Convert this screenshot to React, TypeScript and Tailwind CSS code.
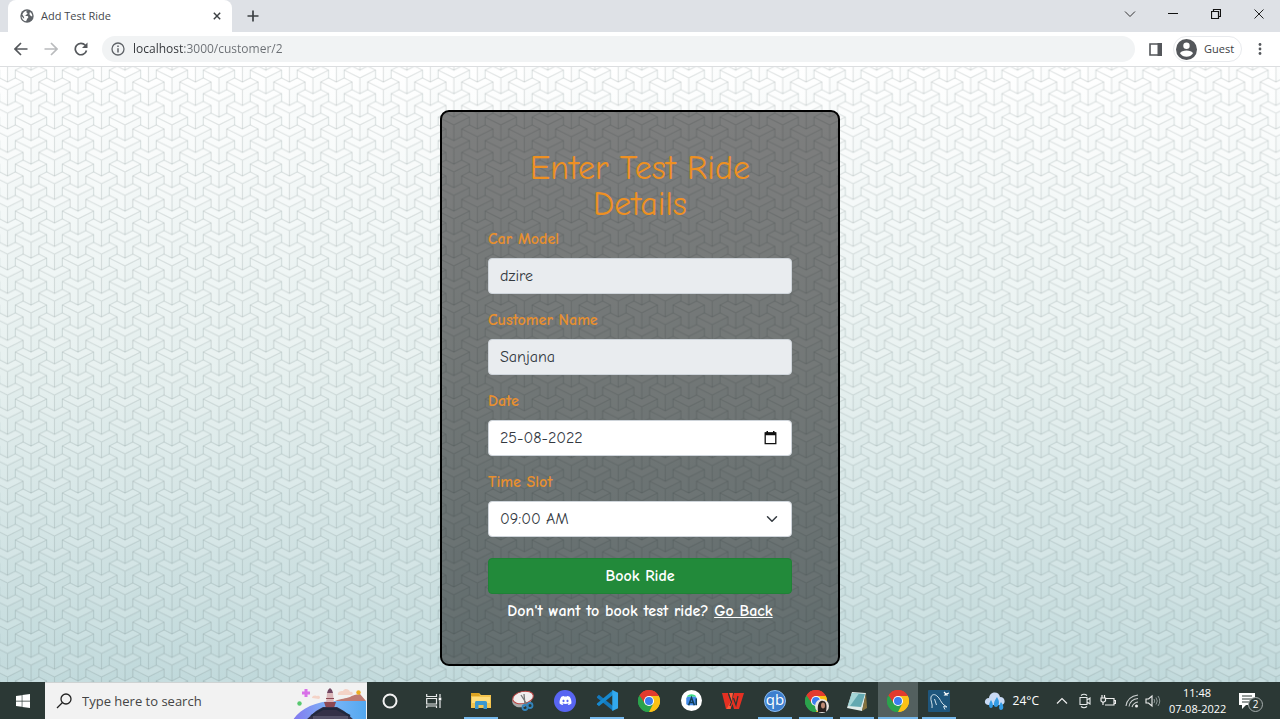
import React from "react";
import { FaDiscord, FaWindows } from "react-icons/fa";

const tripodOutline =
  "M2 -1V0L1 .5V1.5L0 2L-1 1.5V.5L-2 0V-1L-1 -1.5L0 -1L1 -1.5Z";
const tripodRidges = "M0 0L2 -1M0 0L-2 -1M0 0V2";

const tripodCentres = [
  [0, 0], [6, 0], [0, 3], [6, 3], [3, -1.5], [3, 1.5], [3, 4.5],
];

function PatternBackdrop() {
  return (
    <svg className="absolute inset-0 h-full w-full" aria-hidden="true">
      <defs>
        <pattern id="tripods" width="6" height="3" patternUnits="userSpaceOnUse" patternTransform="translate(31 11) scale(7.83)">
          {tripodCentres.map(([x, y]) => (
            <g key={`${x},${y}`} transform={`translate(${x} ${y})`}>
              <path d="M0 0L2 -1V0L1 .5V1.5L0 2Z" fill="#5a6a6a" fillOpacity=".015" />
              <path d="M0 0L2 -1L1 -1.5L0 -1L-1 -1.5L-2 -1Z" fill="#fff" fillOpacity=".08" />
              <path d={tripodOutline} fill="none" stroke="#506464" strokeOpacity=".09" strokeWidth=".15" />
              <path d={tripodRidges} fill="none" stroke="#506464" strokeOpacity=".17" strokeWidth=".15" />
            </g>
          ))}
        </pattern>
      </defs>
      <rect width="100%" height="100%" fill="url(#tripods)" />
    </svg>
  );
}

function ChromeLogo({ className = "" }: { className?: string }) {
  return (
    <svg viewBox="0 0 48 48" className={`h-[22px] w-[22px] ${className}`} aria-hidden="true">
      <path d="M24 24L3.2 12A24 24 0 0 1 44.8 12Z" fill="#e33b2e" />
      <path d="M24 24L44.8 12A24 24 0 0 1 24 48Z" fill="#fbc116" />
      <path d="M24 24V48A24 24 0 0 1 3.2 12Z" fill="#2ba24c" />
      <path d="M24 13H45.3L44.8 12A24 24 0 0 0 3.2 12L14.5 29.5Z" fill="#e33b2e" />
      <path d="M33.5 29.5L24 48A24 24 0 0 0 45.3 13H24Z" fill="#fbc116" />
      <path d="M14.5 29.5L3.2 12A24 24 0 0 0 24 48L33.5 29.5Z" fill="#2ba24c" />
      <circle cx="24" cy="24" r="11" fill="#fff" />
      <circle cx="24" cy="24" r="8.7" fill="#3b7ded" />
    </svg>
  );
}

function TitleBar() {
  return (
    <header className="flex h-8 items-end bg-[#dee1e6] pl-2">
      <div className="flex h-8 w-56 items-center rounded-t-lg bg-white px-3">
        <svg viewBox="0 0 24 24" className="h-3.5 w-3.5 shrink-0" aria-hidden="true">
          <circle cx="12" cy="12" r="11.5" fill="#5f6368" />
          <path d="M13 3C10 3.5 10 6 12.500 7C13.500 8.500 12 9.500 10.500 10C10 11.500 9 12 7.500 12H12.500C14.500 12.500 15 14.500 13 16C12 17 11.500 19 10.500 21C5.500 20.500 3 17 2.600 12.500L7 16.500V14L4 9.500C5.500 5 9 2.700 13 3Z" fill="#fff" />
          <path d="M17 5C19.500 6.500 21.300 9.500 21 12.500C19.500 12.500 18.500 12 17.500 10.500C16 9.500 16 8 17 5Z" fill="#fff" />
        </svg>
        <span className="ml-[7px] flex-1 text-[11px] leading-4 text-[#45484c]">Add Test Ride</span>
        <button aria-label="Close tab" className="-mr-[5px] flex h-4 w-4 items-center justify-center">
          <svg viewBox="0 0 10 10" className="h-2 w-2" aria-hidden="true"><path d="M1 1L9 9M9 1L1 9" stroke="#3c4043" strokeWidth="1.8" /></svg>
        </button>
      </div>
      <button aria-label="New tab" className="ml-3 flex h-8 w-[18px] items-center justify-center">
        <svg viewBox="0 0 12 12" className="h-3 w-3" aria-hidden="true"><path d="M6 .5V11.500M.5 6H11.500" stroke="#3c4043" strokeWidth="1.700" /></svg>
      </button>
      <div className="ml-auto flex h-full items-start">
        <button aria-label="Search tabs" className="flex h-[27px] w-[43px] items-center justify-center">
          <svg viewBox="0 0 12 12" className="h-3 w-3" aria-hidden="true"><path d="M1 3.500L6 8.500L11 3.500" fill="none" stroke="#333" /></svg>
        </button>
        <button aria-label="Minimise" className="flex h-[27px] w-[43px] items-center justify-center">
          <svg viewBox="0 0 10 10" className="h-2.5 w-2.5" aria-hidden="true"><path d="M0 4.500H10" stroke="#111" /></svg>
        </button>
        <button aria-label="Restore" className="flex h-[27px] w-[43px] items-center justify-center">
          <svg viewBox="0 0 10 10" className="h-2.5 w-2.5" aria-hidden="true"><path d="M.5 2.500H7.500V9.500H.5ZM2.500 2.500V.5H9.500V7.500H7.500" fill="none" stroke="#111" strokeWidth="1.200" /></svg>
        </button>
        <button aria-label="Close window" className="flex h-[27px] w-[43px] items-center justify-center">
          <svg viewBox="0 0 10 10" className="h-2.5 w-2.5" aria-hidden="true"><path d="M.5 .5L9.500 9.500M9.500 .5L.5 9.500" stroke="#222" /></svg>
        </button>
      </div>
    </header>
  );
}

function Toolbar() {
  return (
    <nav className="flex h-[35px] items-center border-b border-[#dcdee0] bg-white pr-3 pl-[6px]">
      <button aria-label="Back" className="flex w-[30px] justify-center">
        <svg viewBox="0 0 14 14" className="h-3.5 w-3.5" aria-hidden="true"><path d="M13.500 7H1.500M7 1L1 7L7 13" fill="none" stroke="#54575b" strokeWidth="1.700" /></svg>
      </button>
      <button aria-label="Forward" className="flex w-[30px] justify-center">
        <svg viewBox="0 0 14 14" className="h-3.5 w-3.5" aria-hidden="true"><path d="M.5 7H12.500M7 1L13 7L7 13" fill="none" stroke="#b9bbbd" strokeWidth="1.700" /></svg>
      </button>
      <button aria-label="Reload" className="flex w-[30px] justify-center">
        <svg viewBox="0 0 14 14" className="h-3.5 w-3.5" aria-hidden="true"><path d="M12.500 8.500A5.700 5.700 0 1 1 11.300 3.300" fill="none" stroke="#54575b" strokeWidth="1.700" /><path d="M13.500 .5V6H8Z" fill="#54575b" /></svg>
      </button>
      <div className="ml-[6px] flex h-[26px] flex-1 items-center rounded-full bg-[#f1f3f4] pl-[9px]">
        <svg viewBox="0 0 14 14" className="h-3.5 w-3.5 shrink-0" aria-hidden="true"><circle cx="7" cy="7" r="6" fill="none" stroke="#5f6368" strokeWidth="1.300" /><path d="M7 6.200V10.500M7 3.500V5" stroke="#5f6368" strokeWidth="1.500" /></svg>
        <input
          aria-label="Address"
          defaultValue="localhost:3000/customer/2"
          className="ml-2 min-w-0 flex-1 bg-linear-to-r from-[#303337] from-[51px] to-[#6a6e73] to-[51px] bg-clip-text text-xs leading-5 text-transparent outline-none"
        />
      </div>
      <button aria-label="Side panel" className="ml-[14px]">
        <svg viewBox="0 0 13 13" className="h-[13px] w-[13px]" aria-hidden="true"><path d="M1 1H12V12H1Z" fill="none" stroke="#54575b" strokeWidth="1.600" /><path d="M8.500 0H13V13H8.500Z" fill="#54575b" /></svg>
      </button>
      <button className="ml-[11px] flex h-[26px] w-[69px] items-center rounded-full border border-[#e8eaed] pl-[2px]">
        <svg viewBox="0 0 21 21" className="h-[21px] w-[21px]" aria-hidden="true"><circle cx="10.500" cy="10.500" r="10.500" fill="#54575b" /><circle cx="10.500" cy="6.700" r="3.200" fill="#fff" /><path d="M4 14.200C5.500 10.600 15.500 10.600 17 14.200C15.500 16.500 13 17.800 10.500 17.800S5.500 16.500 4 14.200Z" fill="#fff" /></svg>
        <span className="ml-[7px] text-[11px] leading-4 text-[#3c4043]">Guest</span>
      </button>
      <button aria-label="Menu" className="ml-[10px] flex w-4 justify-center">
        <svg viewBox="0 0 4 14" className="h-3.5 w-1" aria-hidden="true"><circle cx="2" cy="2.500" r="1.400" fill="#54575b" /><circle cx="2" cy="7" r="1.400" fill="#54575b" /><circle cx="2" cy="11.500" r="1.400" fill="#54575b" /></svg>
      </button>
    </nav>
  );
}

const labelClass = "mb-2 block text-base font-bold leading-[22px] text-[#e78f2f]";
const fieldClass = "h-9 w-full rounded border border-[#ced4da] px-[11px] text-base leading-6 text-[#33393f] outline-none";

function RideForm() {
  return (
    <form
      className="relative w-full max-w-[400px] rounded-[9px] border-2 border-black bg-black/50 px-[46px] pt-[38px] pb-[42px] font-['Comic_Sans_MS','Comic_Neue','Noto_Sans',cursive]"
      onSubmit={(event) => event.preventDefault()}
    >
      <h1 className="mb-[6px] text-center text-[34px] leading-9 text-[#ee9022]">Enter Test Ride Details</h1>
      <div className="mb-[15px]">
        <label htmlFor="model" className={labelClass}>Car Model</label>
        <input id="model" readOnly value="dzire" className={`${fieldClass} bg-[#e9ecef]`} />
      </div>
      <div className="mb-[15px]">
        <label htmlFor="customer" className={labelClass}>Customer Name</label>
        <input id="customer" readOnly value="Sanjana" className={`${fieldClass} bg-[#e9ecef]`} />
      </div>
      <div className="mb-[15px]">
        <label htmlFor="date" className={labelClass}>Date</label>
        <div className="relative">
          <input id="date" defaultValue="25-08-2022" className={`${fieldClass} bg-white`} />
          <button type="button" aria-label="Open calendar" className="absolute inset-y-0 right-[15px] flex items-center">
            <svg viewBox="0 0 13 14" className="h-3.5 w-[13px]" aria-hidden="true"><path d="M1.200 2H11.800V12.700H1.200Z" fill="none" stroke="#111" strokeWidth="1.300" /><path d="M1 1.500H12V4.300H1ZM2.500 0H4V2H2.500ZM9 0H10.500V2H9Z" fill="#111" /></svg>
          </button>
        </div>
      </div>
      <div className="mb-[21px]">
        <label htmlFor="slot" className={labelClass}>Time Slot</label>
        <div className="relative">
          <select id="slot" defaultValue="09:00 AM" className={`${fieldClass} appearance-none bg-white`}>
            <option>09:00 AM</option>
          </select>
          <svg viewBox="0 0 16 16" className="pointer-events-none absolute top-3 right-[14px] h-3 w-3" aria-hidden="true"><path d="M2 5L8 11L14 5" fill="none" stroke="#343a40" strokeWidth="2" strokeLinecap="round" strokeLinejoin="round" /></svg>
        </div>
      </div>
      <button type="submit" className="mb-[6px] block h-9 w-full rounded border border-[#1f8236] bg-[#228a3a] text-base font-bold leading-[22px] text-white">Book Ride</button>
      <p className="text-center text-base font-bold leading-[22px] whitespace-nowrap text-white">
        Don't want to book test ride? <a href="#back" className="underline">Go Back</a>
      </p>
    </form>
  );
}

function SearchArt() {
  return (
    <svg viewBox="0 0 76 37" className="h-[37px] w-[76px] shrink-0" aria-hidden="true">
      <defs>
        <linearGradient id="sea" x1="0" x2="1"><stop stopColor="#8378ee" /><stop offset=".5" stopColor="#7cb6f8" /><stop offset="1" stopColor="#53a8ef" /></linearGradient>
      </defs>
      <path d="M2 37C9 25 27 17 47 18H75V37Z" fill="url(#sea)" />
      <path d="M44 18C51 15 54 16 59 14C64 11 66 12 69 11L75 18Z" fill="#bd7b73" />
      <path d="M47 12C46 8 51 8 52 8C54 4 59 7 59 9C62 8 63 12 60 12ZM21 15C21 12 25 12 26 13C29 12 30 15 28 16Z" fill="#f4d3c7" />
      <path d="M15 6V14M11 10H19" stroke="#d871e8" strokeWidth="3" />
      <circle cx="8.500" cy="20.500" r="2.200" fill="#57c86e" /><circle cx="67.500" cy="9.500" r="2.200" fill="#efae22" />
      <path d="M36 10L37 7L39 5L41 7L42 10Z" fill="#6f4560" /><path d="M36 10H42L43 21H35Z" fill="#dbb7ba" /><path d="M35 15H43V16H35ZM33 19H45L43 25H35Z" fill="#8d4852" />
      <path d="M15 37L25 28L32 24H46L53 28L63 37Z" fill="#343047" /><path d="M22 37V33H57V37Z" fill="#545168" /><path d="M20 33L32 26H46L59 33" fill="none" stroke="#20283d" strokeWidth="2" />
    </svg>
  );
}

function TaskButton({ label, open, active, children }: { label: string; open?: boolean; active?: boolean; children: React.ReactNode }) {
  return (
    <button aria-label={label} className={`flex h-full w-10 shrink-0 justify-center ${active ? "bg-[#53605f]" : ""}`}>
      <span className={`flex h-full items-center justify-center border-b-2 pt-[2px] ${active ? "w-10" : "w-[34px]"} ${open ? "border-[#76b9ed]" : "border-transparent"}`}>{children}</span>
    </button>
  );
}

function Taskbar() {
  return (
    <footer className="flex h-[37px] overflow-hidden bg-[#2b3835] text-white">
      <button aria-label="Start" className="flex w-[45px] shrink-0 items-center justify-center"><FaWindows className="h-4 w-4" /></button>
      <div className="flex w-[322px] shrink-0 items-center border-t border-[#cfd3d3] bg-[#f2f2f2]">
        <svg viewBox="0 0 16 16" className="ml-[11px] h-4 w-4 shrink-0" aria-hidden="true"><circle cx="10" cy="6" r="5" fill="none" stroke="#222" strokeWidth="1.300" /><path d="M6.500 9.500L1 15" stroke="#222" strokeWidth="1.300" /></svg>
        <input aria-label="Search" placeholder="Type here to search" className="ml-[10px] min-w-0 flex-1 bg-transparent text-[13px] leading-5 outline-none placeholder:text-[#444]" />
        <SearchArt />
      </div>
      <div className="flex shrink-0 gap-1 pl-[3px]">
        <TaskButton label="Cortana"><svg viewBox="0 0 16 16" className="h-4 w-4"><circle cx="8" cy="8" r="6.500" fill="none" stroke="#f2f2f2" strokeWidth="2" /></svg></TaskButton>
        <TaskButton label="Task view"><svg viewBox="0 0 16 16" className="h-4 w-4"><path d="M.7 1V3.500H10.500V1M.7 5.500H10.500V11H.7ZM.7 15V13H10.500V15M14 1V4M14 8V15" fill="none" stroke="#e8eaea" strokeWidth="1.200" /><path d="M12.700 4.500H15.300V7.500H12.700Z" fill="#fff" /></svg></TaskButton>
      </div>
      <div className="flex shrink-0 gap-[2px] pl-[7px]">
        <TaskButton label="File Explorer" open><svg viewBox="0 0 20 17" className="h-[17px] w-5"><path d="M0 1H8L10 3H20V16H0Z" fill="#f4c44e" /><path d="M0 1H8L9 4H0Z" fill="#dda321" /><path d="M1 5H19V11H1Z" fill="#ffdc7a" /><path d="M4 17V11C4 9 5 9 6 9H14C16 9 16 10 16 11V17H12.500V13H7.500V17Z" fill="#3c98cf" /></svg></TaskButton>
        <TaskButton label="Snipping Tool"><svg viewBox="0 0 24 22" className="h-[22px] w-6"><ellipse cx="11" cy="10" rx="10" ry="7" transform="rotate(-18 11 10)" fill="#aaa" /><ellipse cx="12" cy="7.500" rx="10.500" ry="6" transform="rotate(-12 12 7.500)" fill="#f0eeee" stroke="#bb4645" /><path d="M10 5L17 16M13 4L14 15" stroke="#777" strokeWidth="1.300" /><circle cx="14" cy="17.500" r="2.500" fill="none" stroke="#3384bc" strokeWidth="1.800" /><circle cx="19" cy="15.500" r="2.500" fill="none" stroke="#3384bc" strokeWidth="1.800" /></svg></TaskButton>
        <TaskButton label="Discord"><span className="flex h-[22px] w-[22px] items-center justify-center rounded-full bg-[#5865f2]"><FaDiscord className="h-[13px] w-[13px]" /></span></TaskButton>
        <TaskButton label="Visual Studio Code" open><svg viewBox="0 0 24 24" className="h-[23px] w-[23px]"><path d="M1 8L3 6L18 18V23L1 9Z" fill="#1479bd" /><path d="M1 16L3 18L18 6V1L1 15Z" fill="#1689cf" /><path d="M17 1L23 4V20L17 23Z" fill="#32a9ef" /></svg></TaskButton>
        <TaskButton label="Google Chrome"><ChromeLogo /></TaskButton>
        <TaskButton label="Android Studio"><svg viewBox="0 0 22 22" className="h-[21px] w-[21px]"><circle cx="11" cy="11" r="11" fill="#fff" /><path d="M6 7C7 3.500 15 3.500 16 7Z" fill="#3ddc84" /><rect x="5.500" y="7" width="11" height="9" rx="2" fill="#438bea" /><path d="M8 16L11 8L14 16M9 13H13M16 9V16" fill="none" stroke="#123e57" strokeWidth="1.600" /></svg></TaskButton>
        <TaskButton label="WPS Office"><svg viewBox="0 0 22 18" className="h-[18px] w-[22px]"><path d="M0 1H6L9.500 11L12 1H22L17 17H12L10.500 12L8.500 17H4Z" fill="#e53022" /><path d="M7 1H11L8.500 17H4.500L9 9Z" fill="#ff5a3a" /><path d="M6.500 2L9.500 10L8 14M16 4L14 13L11.500 6" fill="none" stroke="#2b3835" strokeWidth="1.200" /></svg></TaskButton>
        <TaskButton label="qBittorrent" open><span className="flex h-[22px] w-[22px] items-center justify-center rounded-full border border-[#8bbcf2] bg-[#3d7fce] pb-[3px] text-[15px] leading-4">qb</span></TaskButton>
      </div>
      <div className="flex shrink-0 gap-px pl-px">
        <TaskButton label="Chrome profile" open><span className="relative"><ChromeLogo /><svg viewBox="0 0 14 14" className="absolute top-[9px] left-[10px] h-3.5 w-3.5"><circle cx="7" cy="7" r="7" fill="#e9e3e0" /><path d="M3 13C2 4 5 1 8 2C12 2 12 8 11 13Z" fill="#29211f" /><ellipse cx="8" cy="6.500" rx="2" ry="3" fill="#bd8973" /></svg></span></TaskButton>
        <TaskButton label="Notepad" open><svg viewBox="0 0 22 22" className="h-[22px] w-[22px]"><path d="M6 2L20 3L16 21L1 18Z" fill="#e1ecea" /><path d="M6 3L19 4L15 17L2 16Z" fill="#64a9b1" /><path d="M6 3L13 3.500L4 16H2Z" fill="#a5d6d7" /><path d="M20 3L21 18L16 21Z" fill="#86723f" /></svg></TaskButton>
        <TaskButton label="Chrome window" open active><ChromeLogo /></TaskButton>
        <TaskButton label="MySQL Workbench" open><svg viewBox="0 0 22 22" className="h-[22px] w-[22px]"><rect width="22" height="22" rx="1" fill="#1e567d" /><path d="M4 18C5 14 2 10 3 7C4 4 7 4 9 6C12 8 13 13 16 15L19 17L15.500 16.500L17 19.500M6.500 9L8.500 15" fill="none" stroke="#d2e2eb" strokeWidth="1" /><path d="M16 2L18 4L17 5L20 5M18 4L21 3" fill="none" stroke="#fff" strokeWidth="1.200" /></svg></TaskButton>
      </div>
      <div className="ml-auto flex shrink-0 items-center pr-[17px]">
        <svg viewBox="0 0 22 20" className="h-5 w-[22px]" aria-hidden="true"><path d="M5 14C-1 14 0 7 5 7C6 0 15 0 16 6C22 6 22 14 17 14Z" fill="#c9daf5" /><path d="M7 9C4 14 5 17 7 17S10 14 7 9ZM13 6C8 13 10 16 12 16S17 12 13 6ZM17 11C14 16 15 19 17 19S21 16 17 11Z" fill="#329be5" /></svg>
        <span className="ml-[7px] text-xs leading-4">24°C</span>
        <svg viewBox="0 0 12 12" className="ml-[17px] h-3 w-3" aria-hidden="true"><path d="M1 8.500L6 3.500L11 8.500" fill="none" stroke="#eee" strokeWidth="1.200" /></svg>
        <svg viewBox="0 0 14 16" className="ml-[11px] h-4 w-3.5" aria-hidden="true"><path d="M1 4.500H8V11.500H1ZM8 7L11 5V11L8 9M2 2.500Q5 0 8 2.500M2 13.500Q5 16 8 13.500" fill="none" stroke="#e6eaea" strokeWidth="1.100" /></svg>
        <svg viewBox="0 0 16 12" className="ml-[7px] h-3 w-4" aria-hidden="true"><path d="M6 3.500H14V10H5M14 5.500H15.500V8.500H14M3 7.500V10M1 3H5.500V6L3 7.500L1 6ZM2 0V3M4.500 0V3" fill="none" stroke="#eee" strokeWidth="1.200" /></svg>
        <svg viewBox="0 0 14 14" className="ml-[9px] h-3.5 w-3.5" aria-hidden="true"><path d="M1 12C2 5 6 2 13 1M4 12.500C5 7 8 5 13 4.500M7 13C8 10 9 8.500 13 8" fill="none" stroke="#cdd1d1" strokeWidth="1.100" /><circle cx="11.500" cy="12" r="1.500" fill="#eee" /></svg>
        <svg viewBox="0 0 16 14" className="ml-[6px] h-3.5 w-4" aria-hidden="true"><path d="M1 5H3.500L7 2V12L3.500 9H1Z" fill="none" stroke="#eee" strokeWidth="1.100" /><path d="M9 5Q10.500 7 9 9M11 3.500Q13.500 7 11 10.500M13 2Q16.500 7 13 12" fill="none" stroke="#8e9897" /></svg>
        <div className="ml-2 w-[56px] text-center text-[11px] leading-4 whitespace-nowrap"><time className="block">11:48</time><time className="block">07-08-2022</time></div>
        <button aria-label="Notifications" className="relative ml-[14px] h-[22px] w-6">
          <svg viewBox="0 0 16 16" className="h-4 w-4" aria-hidden="true"><path d="M0 0H16V12H7L3 16V12H0Z" fill="#fff" /><path d="M3 3H13M3 6H13M3 9H10" stroke="#2b3835" /></svg>
          <span className="absolute right-0 bottom-0 flex h-[15px] w-[15px] items-center justify-center rounded-full border border-[#a5adac] bg-[#303d3a] text-[10px] leading-3">2</span>
        </button>
      </div>
    </footer>
  );
}

export default function App() {
  return (
    <div className="flex min-h-screen flex-col font-['Open_Sans',sans-serif]">
      <TitleBar />
      <Toolbar />
      <main className="relative flex flex-1 flex-col items-center bg-linear-to-b from-white via-[#e6f0ef] to-[#c2dadc] px-4 pt-[43px] pb-4">
        <PatternBackdrop />
        <RideForm />
      </main>
      <Taskbar />
    </div>
  );
}
